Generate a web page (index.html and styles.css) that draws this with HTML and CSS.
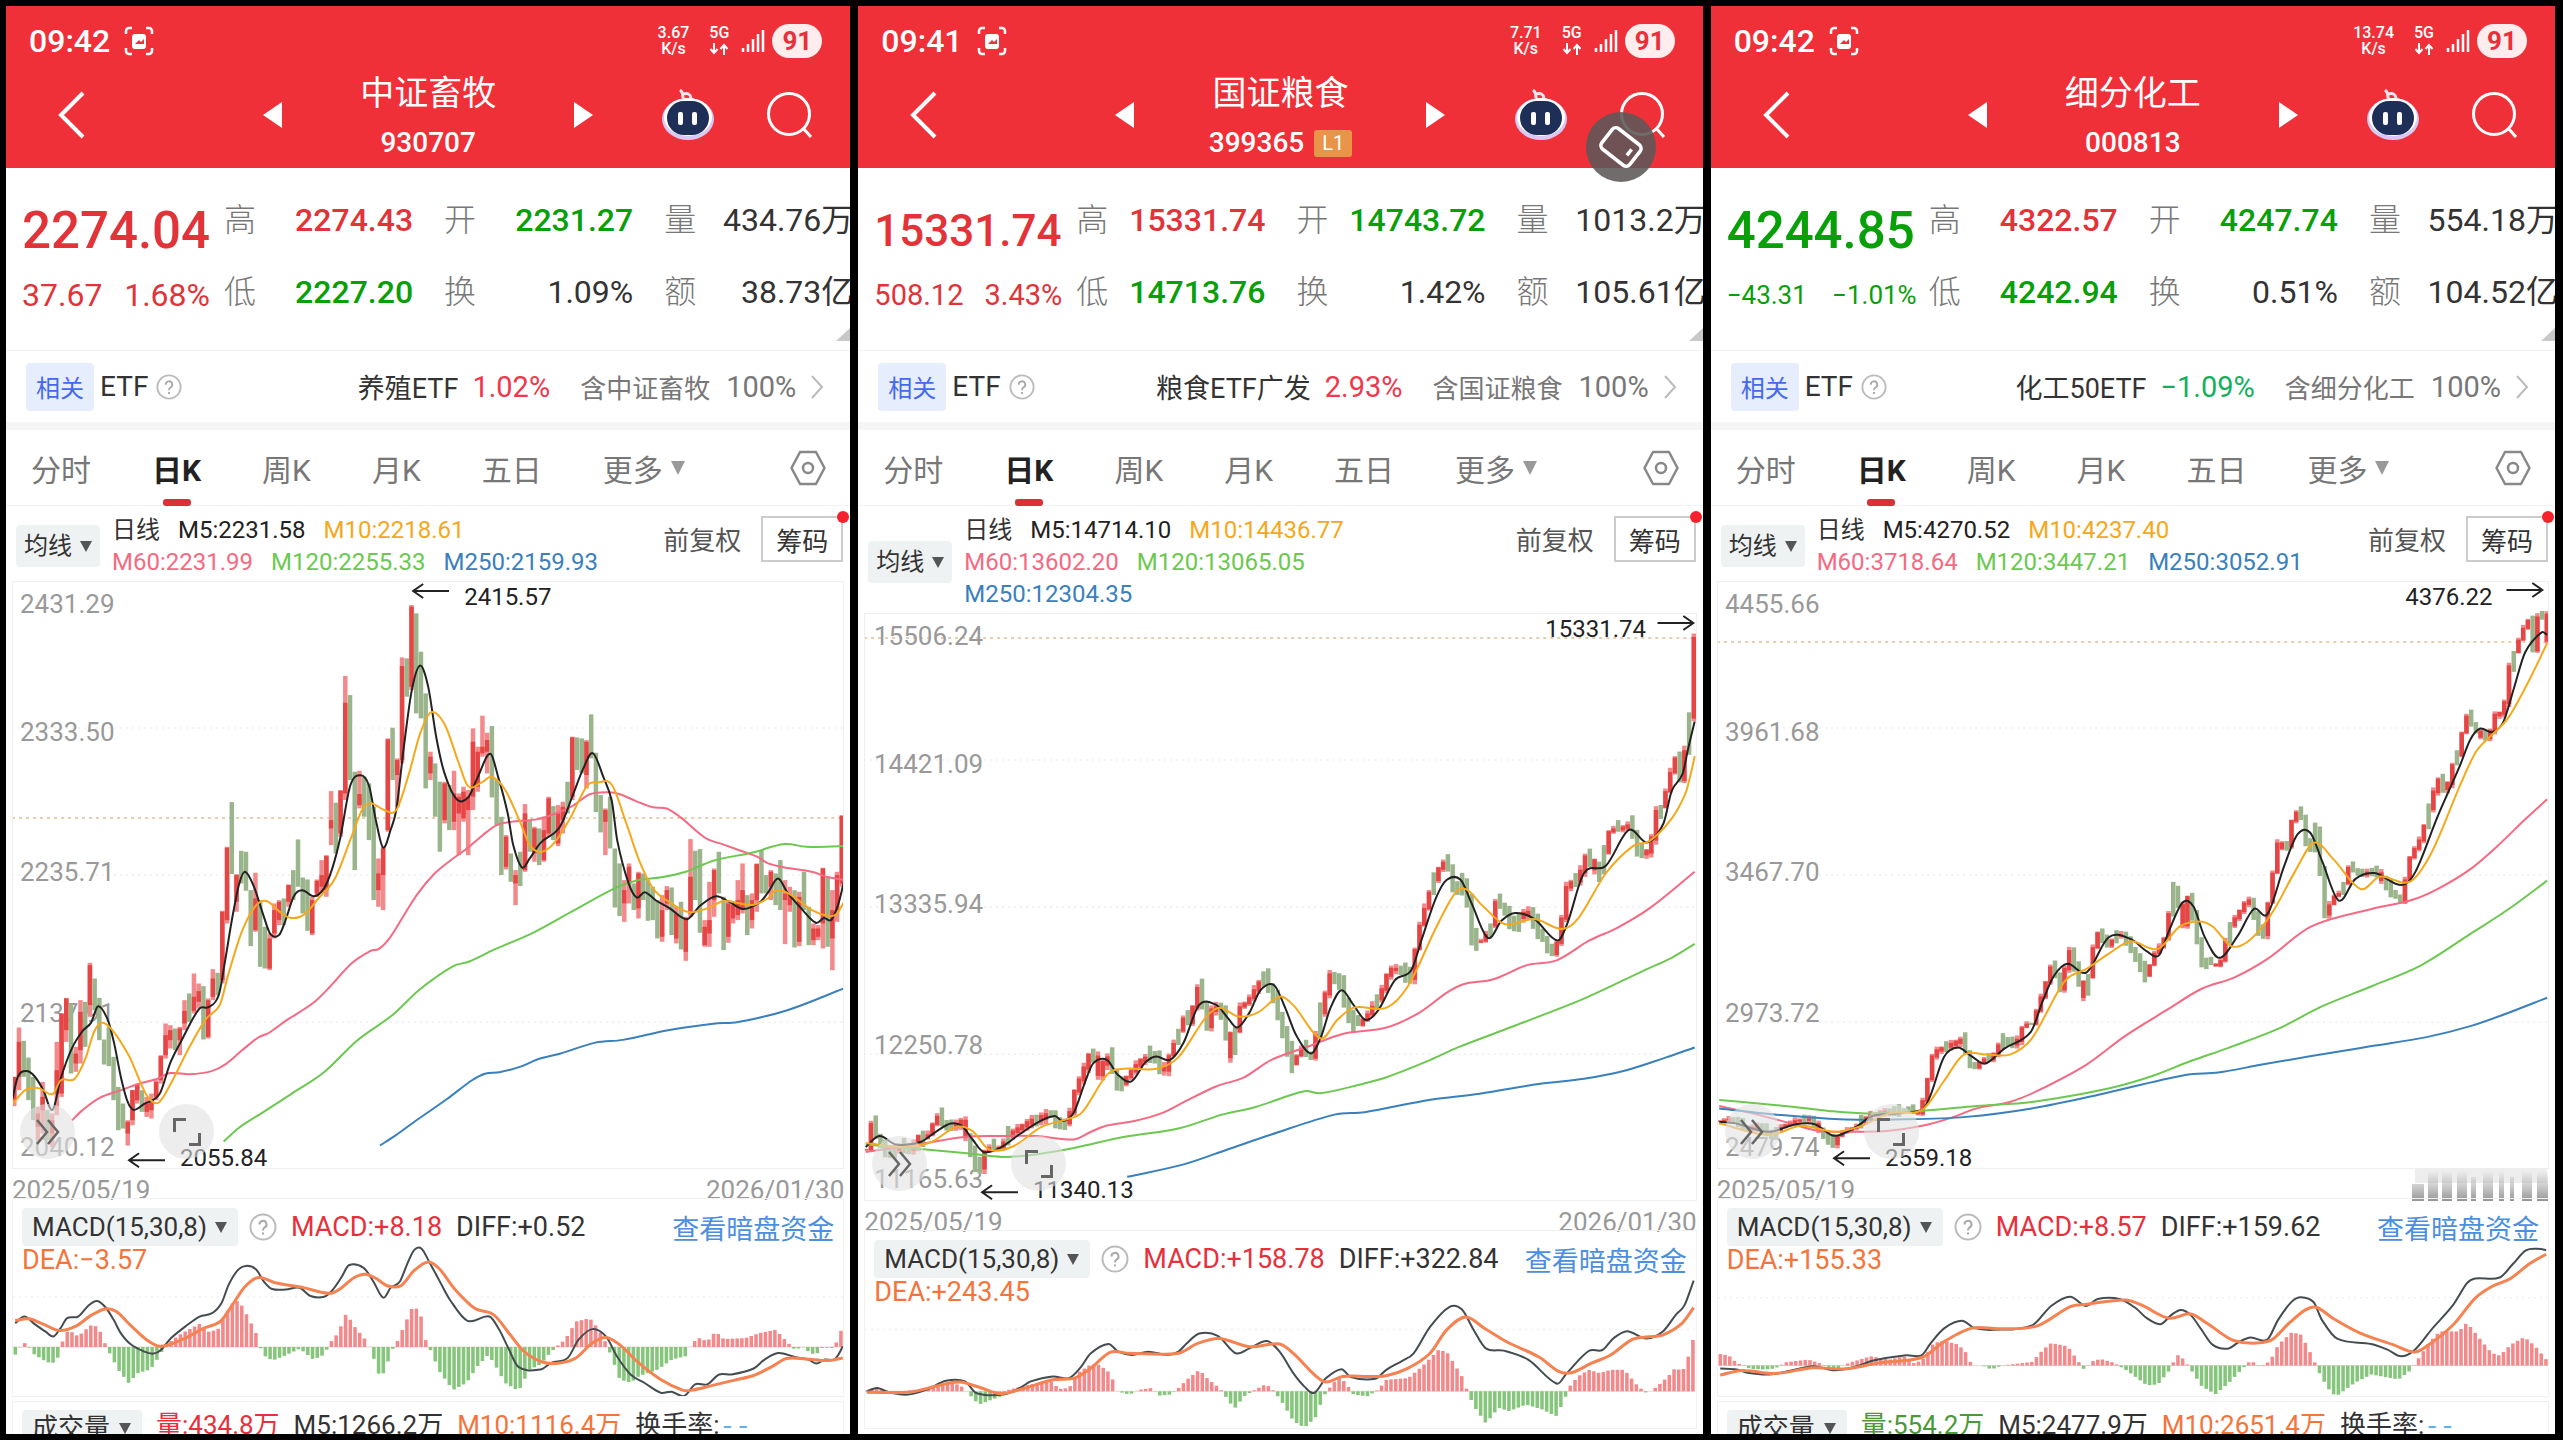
FILE: index.html
```html
<!DOCTYPE html>
<html lang="zh-CN">
<head>
  <meta charset="UTF-8">
  <meta name="viewport" content="width=device-width, initial-scale=1.0">
  <title>指数行情</title>
  <link rel="stylesheet" href="styles.css">
</head>
<body>

<!-- shared icons -->
<svg class="sprite" aria-hidden="true">
  <symbol id="i-shot" viewBox="0 0 30 30">
    <path d="M2 8V5a3 3 0 0 1 3-3h3M22 2h3a3 3 0 0 1 3 3v3M28 22v3a3 3 0 0 1-3 3h-3M8 28H5a3 3 0 0 1-3-3v-3" fill="none" stroke="#fff" stroke-width="2.5"/>
    <rect x="8" y="8" width="14" height="15" rx="3" fill="#fff"/>
    <path d="M11 18l4-4 2 2 3-3v5z" fill="#f03038"/>
  </symbol>
  <symbol id="i-data" viewBox="0 0 20 12">
    <path d="M5 0v9M1.500 6L5 10l3.500-4M15 12V3M11.500 6L15 2l3.500 4" fill="none" stroke="#fff" stroke-width="2"/>
  </symbol>
  <symbol id="i-signal" viewBox="0 0 24 24">
    <path d="M2 19v4M7 15v8M12 10v13M17 5v18M22 1v22" stroke="#fff" stroke-width="2.500"/>
  </symbol>
  <symbol id="i-back" viewBox="0 0 28 48">
    <path d="M26 2L4 24l22 22" fill="none" stroke="#fff" stroke-width="4"/>
  </symbol>
  <symbol id="i-robot" viewBox="0 0 54 52">
    <path d="M19 1q3 2 3 8M22 5q7-2 8 4" fill="none" stroke="#fbe3ee" stroke-width="3"/>
    <ellipse cx="27" cy="30" rx="26" ry="21" fill="#d9c8f2"/>
    <ellipse cx="27" cy="28" rx="24" ry="19" fill="#fff"/>
    <rect x="6" y="12" width="42" height="34" rx="17" fill="#1d2f57"/>
    <rect x="17" y="23" width="5" height="13" rx="2" fill="#fff"/>
    <rect x="31" y="23" width="5" height="13" rx="2" fill="#fff"/>
  </symbol>
  <symbol id="i-search" viewBox="0 0 46 46">
    <circle cx="22" cy="22" r="20.500" fill="none" stroke="#fff" stroke-width="3"/>
    <path d="M36 36l8 9" stroke="#fff" stroke-width="3"/>
  </symbol>
  <symbol id="i-help" viewBox="0 0 28 28">
    <circle cx="14" cy="14" r="12.500" fill="none" stroke="#bbb" stroke-width="2"/>
    <path d="M10.500 11.500a3.500 3.500 0 1 1 5 3q-1.500 1-1.500 3M14 19.500v2" fill="none" stroke="#aaa" stroke-width="2"/>
  </symbol>
  <symbol id="i-more" viewBox="0 0 14 26">
    <path d="M2 2l10 11L2 24" fill="none" stroke="#bbb" stroke-width="2"/>
  </symbol>
  <symbol id="i-gear" viewBox="0 0 36 36">
    <path d="M10 2h16l8.500 16L26 34H10L1.500 18z" fill="none" stroke="#888" stroke-width="2.500" stroke-linejoin="round"/>
    <circle cx="18" cy="18" r="5" fill="none" stroke="#888" stroke-width="2.500"/>
  </symbol>
  <symbol id="i-forward" viewBox="0 0 26 28">
    <path d="M2 2l10 12L2 26M13 2l10 12-10 12" fill="none" stroke="#666" stroke-width="2.500"/>
  </symbol>
  <symbol id="i-expand" viewBox="0 0 28 28">
    <path d="M1.500 14V1.500H13M26.500 15v11.500H16" fill="none" stroke="#666" stroke-width="3"/>
  </symbol>
  <symbol id="i-arrow" viewBox="0 0 38 16">
    <path d="M38 8H2M12 1L2 8l10 7" fill="none" stroke="#222" stroke-width="2"/>
  </symbol>
</svg>

<!-- 中证畜牧 -->
<main class="phone">
  <header class="top">
    <div class="status">
      <span class="clock">09:42</span>
      <svg class="shot"><use href="#i-shot"/></svg>
      <span class="speed">3.67<br>K/s</span>
      <span class="net">5G<svg><use href="#i-data"/></svg></span>
      <svg class="signal"><use href="#i-signal"/></svg>
      <span class="battery">91</span>
    </div>
    <nav class="nav">
      <button class="back" aria-label="返回"><svg><use href="#i-back"/></svg></button>
      <div class="switcher">
        <button class="prev" aria-label="上一个"></button>
        <h1>中证畜牧<small>930707</small></h1>
        <button class="next" aria-label="下一个"></button>
      </div>
      <div class="tools">
        <button aria-label="助手"><svg class="robot"><use href="#i-robot"/></svg></button>
        <button aria-label="搜索"><svg class="search"><use href="#i-search"/></svg></button>
      </div>
    </nav>
  </header>

  <section class="quote">
    <div class="last up">
      <strong>2274.04</strong>
      <p><span>37.67</span><span>1.68%</span></p>
    </div>
    <dl class="stats">
      <div><dt>高</dt><dd class="up">2274.43</dd></div>
      <div><dt>开</dt><dd class="down">2231.27</dd></div>
      <div><dt>量</dt><dd>434.76万</dd></div>
      <div><dt>低</dt><dd class="down">2227.20</dd></div>
      <div><dt>换</dt><dd>1.09%</dd></div>
      <div><dt>额</dt><dd>38.73亿</dd></div>
    </dl>
  </section>

  <section class="etf">
    <span class="tag">相关</span>
    <span class="kind">ETF</span>
    <svg class="help"><use href="#i-help"/></svg>
    <a href="#" class="fund">养殖ETF</a>
    <span class="rate rise">1.02%</span>
    <span class="share">含中证畜牧</span>
    <span class="pct">100%</span>
    <svg class="more"><use href="#i-more"/></svg>
  </section>

  <nav class="tabs">
    <button>分时</button>
    <button class="active">日K</button>
    <button>周K</button>
    <button>月K</button>
    <button>五日</button>
    <button class="drop">更多</button>
    <button class="gear" aria-label="设置"><svg><use href="#i-gear"/></svg></button>
  </nav>

  <section class="ma">
    <label class="pick"><select aria-label="指标"><option>均线</option></select></label>
    <div class="legend">
      <p><span>日线</span><span class="m5">M5:2231.58</span><span class="m10">M10:2218.61</span></p>
      <p><span class="m60">M60:2231.99</span><span class="m120">M120:2255.33</span><span class="m250">M250:2159.93</span></p>
    </div>
    <span class="adjust">前复权</span>
    <button class="chips">筹码</button>
  </section>

  <section class="chart">
    <svg class="kline" viewBox="0 0 832 588">
      <path class="grid" d="M0 147H832M0 294H832M0 441H832"/>
      <path class="lastline" d="M0 237H832"/>
      <g class="axis">
        <text x="8" y="32">2431.29</text>
        <text x="8" y="160">2333.50</text>
        <text x="8" y="300">2235.71</text>
        <text x="8" y="441">2137.91</text>
        <text x="8" y="575">2040.12</text>
      </g>
      <svg data-candles="livestock" width="832" height="588" viewBox="0 -57 176 1764" preserveAspectRatio="none"></svg>
      <svg data-lines="livestock" width="832" height="588" viewBox="21 3 1518 1487" preserveAspectRatio="none"></svg>
      <g class="mark">
        <use href="#i-arrow" x="399" y="2" width="38" height="16"/>
        <text x="452" y="24">2415.57</text>
        <use href="#i-arrow" x="115" y="571" width="38" height="16"/>
        <text x="168" y="585">2055.84</text>
      </g>
    </svg>
    <button class="round forward" aria-label="快进"><svg><use href="#i-forward"/></svg></button>
    <button class="round expand" aria-label="全屏"><svg><use href="#i-expand"/></svg></button>
  </section>
  <div class="dates"><time>2025/05/19</time><time>2026/01/30</time></div>

  <section class="macd">
    <svg class="wave" data-macd="livestock" viewBox="21 85 1518 595" preserveAspectRatio="none"></svg>
    <div class="sub">
      <label class="pick"><select aria-label="副图"><option>MACD(15,30,8)</option></select></label>
      <svg class="help"><use href="#i-help"/></svg>
      <span class="hot">MACD:+8.18</span>
      <span>DIFF:+0.52</span>
      <a href="#">查看暗盘资金</a>
    </div>
    <p class="dea">DEA:−3.57</p>
  </section>

  <section class="volume">
    <label class="pick"><select aria-label="副图二"><option>成交量</option></select></label>
    <span class="hot">量:434.8万</span>
    <span>M5:1266.2万</span>
    <span class="dea">M10:1116.4万</span>
    <span>换手率:<i>--</i></span>
  </section>
</main>

<!-- 国证粮食 -->
<main class="phone">
  <header class="top">
    <div class="status">
      <span class="clock">09:41</span>
      <svg class="shot"><use href="#i-shot"/></svg>
      <span class="speed">7.71<br>K/s</span>
      <span class="net">5G<svg><use href="#i-data"/></svg></span>
      <svg class="signal"><use href="#i-signal"/></svg>
      <span class="battery">91</span>
    </div>
    <nav class="nav">
      <button class="back" aria-label="返回"><svg><use href="#i-back"/></svg></button>
      <div class="switcher">
        <button class="prev" aria-label="上一个"></button>
        <h1>国证粮食<small>399365<b>L1</b></small></h1>
        <button class="next" aria-label="下一个"></button>
      </div>
      <div class="tools">
        <button aria-label="助手"><svg class="robot"><use href="#i-robot"/></svg></button>
        <button aria-label="搜索"><svg class="search"><use href="#i-search"/></svg></button>
      </div>
    </nav>
    <button class="rotate" aria-label="旋转屏幕">
      <svg viewBox="0 0 44 44">
        <rect x="7" y="11" width="30" height="22" rx="4" fill="none" stroke="#fff" stroke-width="3" transform="rotate(38 22 22)"/>
        <path d="M27 29l4-5" stroke="#fff" stroke-width="3"/>
      </svg>
    </button>
  </header>

  <section class="quote">
    <div class="last up">
      <strong class="long">15331.74</strong>
      <p class="mid"><span>508.12</span><span>3.43%</span></p>
    </div>
    <dl class="stats">
      <div><dt>高</dt><dd class="up">15331.74</dd></div>
      <div><dt>开</dt><dd class="down">14743.72</dd></div>
      <div><dt>量</dt><dd>1013.2万</dd></div>
      <div><dt>低</dt><dd class="down">14713.76</dd></div>
      <div><dt>换</dt><dd>1.42%</dd></div>
      <div><dt>额</dt><dd>105.61亿</dd></div>
    </dl>
  </section>

  <section class="etf">
    <span class="tag">相关</span>
    <span class="kind">ETF</span>
    <svg class="help"><use href="#i-help"/></svg>
    <a href="#" class="fund">粮食ETF广发</a>
    <span class="rate rise">2.93%</span>
    <span class="share">含国证粮食</span>
    <span class="pct">100%</span>
    <svg class="more"><use href="#i-more"/></svg>
  </section>

  <nav class="tabs">
    <button>分时</button>
    <button class="active">日K</button>
    <button>周K</button>
    <button>月K</button>
    <button>五日</button>
    <button class="drop">更多</button>
    <button class="gear" aria-label="设置"><svg><use href="#i-gear"/></svg></button>
  </nav>

  <section class="ma">
    <label class="pick"><select aria-label="指标"><option>均线</option></select></label>
    <div class="legend">
      <p><span>日线</span><span class="m5">M5:14714.10</span><span class="m10">M10:14436.77</span></p>
      <p><span class="m60">M60:13602.20</span><span class="m120">M120:13065.05</span></p>
      <p><span class="m250">M250:12304.35</span></p>
    </div>
    <span class="adjust">前复权</span>
    <button class="chips">筹码</button>
  </section>

  <section class="chart">
    <svg class="kline" viewBox="0 0 832 588">
      <path class="grid" d="M0 147H832M0 294H832M0 441H832"/>
      <path class="lastline" d="M0 25H832"/>
      <g class="axis">
        <text x="10" y="32">15506.24</text>
        <text x="10" y="160">14421.09</text>
        <text x="10" y="300">13335.94</text>
        <text x="10" y="441">12250.78</text>
        <text x="10" y="575">11165.63</text>
      </g>
      <svg data-candles="grain" width="832" height="588" viewBox="0 367 176 1182" preserveAspectRatio="none"></svg>
      <svg data-lines="grain" width="832" height="588" viewBox="17 367 1518 1182" preserveAspectRatio="none"></svg>
      <g class="mark">
        <text x="681" y="24">15331.74</text>
        <use href="#i-arrow" width="38" height="16" transform="translate(831 2) scale(-1 1)"/>
        <use href="#i-arrow" x="116" y="571" width="38" height="16"/>
        <text x="169" y="585">11340.13</text>
      </g>
    </svg>
    <button class="round forward" aria-label="快进"><svg><use href="#i-forward"/></svg></button>
    <button class="round expand" aria-label="全屏"><svg><use href="#i-expand"/></svg></button>
  </section>
  <div class="dates"><time>2025/05/19</time><time>2026/01/30</time></div>

  <section class="macd">
    <svg class="wave" data-macd="grain" viewBox="17 180 1518 596" preserveAspectRatio="none"></svg>
    <div class="sub">
      <label class="pick"><select aria-label="副图"><option>MACD(15,30,8)</option></select></label>
      <svg class="help"><use href="#i-help"/></svg>
      <span class="hot">MACD:+158.78</span>
      <span>DIFF:+322.84</span>
      <a href="#">查看暗盘资金</a>
    </div>
    <p class="dea">DEA:+243.45</p>
  </section>
</main>

<!-- 细分化工 -->
<main class="phone">
  <header class="top">
    <div class="status">
      <span class="clock">09:42</span>
      <svg class="shot"><use href="#i-shot"/></svg>
      <span class="speed">13.74<br>K/s</span>
      <span class="net">5G<svg><use href="#i-data"/></svg></span>
      <svg class="signal"><use href="#i-signal"/></svg>
      <span class="battery">91</span>
    </div>
    <nav class="nav">
      <button class="back" aria-label="返回"><svg><use href="#i-back"/></svg></button>
      <div class="switcher">
        <button class="prev" aria-label="上一个"></button>
        <h1>细分化工<small>000813</small></h1>
        <button class="next" aria-label="下一个"></button>
      </div>
      <div class="tools">
        <button aria-label="助手"><svg class="robot"><use href="#i-robot"/></svg></button>
        <button aria-label="搜索"><svg class="search"><use href="#i-search"/></svg></button>
      </div>
    </nav>
  </header>

  <section class="quote">
    <div class="last down">
      <strong>4244.85</strong>
      <p class="small"><span>−43.31</span><span>−1.01%</span></p>
    </div>
    <dl class="stats">
      <div><dt>高</dt><dd class="up">4322.57</dd></div>
      <div><dt>开</dt><dd class="down">4247.74</dd></div>
      <div><dt>量</dt><dd>554.18万</dd></div>
      <div><dt>低</dt><dd class="down">4242.94</dd></div>
      <div><dt>换</dt><dd>0.51%</dd></div>
      <div><dt>额</dt><dd>104.52亿</dd></div>
    </dl>
  </section>

  <section class="etf">
    <span class="tag">相关</span>
    <span class="kind">ETF</span>
    <svg class="help"><use href="#i-help"/></svg>
    <a href="#" class="fund">化工50ETF</a>
    <span class="rate fall">−1.09%</span>
    <span class="share">含细分化工</span>
    <span class="pct">100%</span>
    <svg class="more"><use href="#i-more"/></svg>
  </section>

  <nav class="tabs">
    <button>分时</button>
    <button class="active">日K</button>
    <button>周K</button>
    <button>月K</button>
    <button>五日</button>
    <button class="drop">更多</button>
    <button class="gear" aria-label="设置"><svg><use href="#i-gear"/></svg></button>
  </nav>

  <section class="ma">
    <label class="pick"><select aria-label="指标"><option>均线</option></select></label>
    <div class="legend">
      <p><span>日线</span><span class="m5">M5:4270.52</span><span class="m10">M10:4237.40</span></p>
      <p><span class="m60">M60:3718.64</span><span class="m120">M120:3447.21</span><span class="m250">M250:3052.91</span></p>
    </div>
    <span class="adjust">前复权</span>
    <button class="chips">筹码</button>
  </section>

  <section class="chart">
    <svg class="kline" viewBox="0 0 832 588">
      <path class="grid" d="M0 147H832M0 294H832M0 441H832"/>
      <path class="lastline" d="M0 61H832"/>
      <g class="axis">
        <text x="8" y="32">4455.66</text>
        <text x="8" y="160">3961.68</text>
        <text x="8" y="300">3467.70</text>
        <text x="8" y="441">2973.72</text>
        <text x="8" y="575">2479.74</text>
      </g>
      <svg data-candles="chemical" width="832" height="588" viewBox="0 307 176 1180" preserveAspectRatio="none"></svg>
      <svg data-lines="chemical" width="832" height="588" viewBox="26 307 1518 1180" preserveAspectRatio="none"></svg>
      <g class="mark">
        <text x="688" y="24">4376.22</text>
        <use href="#i-arrow" width="38" height="16" transform="translate(827 1) scale(-1 1)"/>
        <use href="#i-arrow" x="115" y="569" width="38" height="16"/>
        <text x="168" y="585">2559.18</text>
      </g>
    </svg>
    <button class="round forward" aria-label="快进"><svg><use href="#i-forward"/></svg></button>
    <button class="round expand" aria-label="全屏"><svg><use href="#i-expand"/></svg></button>
  </section>
  <div class="dates">
    <time>2025/05/19</time>
    <svg class="smear" viewBox="0 0 138 32">
      <defs>
        <linearGradient id="smear" x1="0" y1="0" x2="0" y2="1">
          <stop offset="0" stop-color="#999" stop-opacity="0"/>
          <stop offset=".5" stop-color="#999" stop-opacity=".5"/>
          <stop offset="1" stop-color="#888" stop-opacity=".9"/>
        </linearGradient>
      </defs>
      <path fill="#ededed" d="M4 0h132v14h-132z"/>
      <path fill="url(#smear)" d="M1 15h12v17h-12zM17 2h10v30h-10zM31 2h10v30h-10zM46 2h10v30h-10zM60 8h5v24h-5zM72 2h10v30h-10zM88 2h5v30h-5zM99 8h4v24h-4zM111 2h10v30h-10zM126 2h11v30h-11z"/>
    </svg>
  </div>

  <section class="macd">
    <svg class="wave" data-macd="chemical" viewBox="26 85 1518 595" preserveAspectRatio="none"></svg>
    <div class="sub">
      <label class="pick"><select aria-label="副图"><option>MACD(15,30,8)</option></select></label>
      <svg class="help"><use href="#i-help"/></svg>
      <span class="hot">MACD:+8.57</span>
      <span>DIFF:+159.62</span>
      <a href="#">查看暗盘资金</a>
    </div>
    <p class="dea">DEA:+155.33</p>
  </section>

  <section class="volume">
    <label class="pick"><select aria-label="副图二"><option>成交量</option></select></label>
    <span class="cold">量:554.2万</span>
    <span>M5:2477.9万</span>
    <span class="dea">M10:2651.4万</span>
    <span>换手率:<i>--</i></span>
  </section>
</main>

<script src="charts.js"></script>
</body>
</html>
```

FILE: styles.css
```css
* { box-sizing: border-box; }
body {
  margin: 0;
  height: 100vh;
  padding: 6px 8px 6px 6px;
  display: grid;
  grid-template-columns: repeat(3, 1fr);
  gap: 8px;
  background: #000;
  color: #333;
  font-family: Roboto, "Noto Sans CJK SC", sans-serif;
  overflow: hidden;
}
button, select {
  border: none;
  padding: 0;
  margin: 0;
  background: none;
  color: inherit;
  font: inherit;
  cursor: pointer;
}
a { color: inherit; text-decoration: none; }
p, h1, dl, dd { margin: 0; }
svg { display: block; }
.sprite { position: absolute; width: 0; height: 0; }
.phone {
  position: relative;
  min-width: 0;
  background: #fff;
  overflow: hidden;
  white-space: nowrap;
}

/* header */
.top { background: #f03038; color: #fff; position: relative; }
.status {
  display: flex;
  align-items: center;
  height: 62px;
  padding: 8px 28px 0 23px;
}
.clock { font-size: 32px; font-weight: 500; }
.shot { width: 30px; height: 30px; margin: 0 auto 0 14px; }
.speed, .net {
  font-size: 16px;
  line-height: 16px;
  font-weight: 500;
  text-align: center;
}
.net { margin: 0 12px 0 20px; }
.net svg { width: 20px; height: 12px; margin: 2px 0; }
.signal { width: 24px; height: 24px; margin-right: 7px; }
.battery {
  width: 50px;
  border-radius: 17px;
  background: #ffecec;
  color: #e8303a;
  font-size: 26px;
  line-height: 34px;
  font-weight: 700;
  text-align: center;
}
.nav {
  display: grid;
  grid-template-columns: 1fr 330px 1fr;
  align-items: center;
  height: 100px;
}
.nav button { margin-bottom: 6px; }
.back { justify-self: start; margin-left: 51px; }
.back svg { width: 28px; height: 48px; }
.switcher { display: flex; align-items: center; justify-content: space-between; }
.prev, .next {
  border: solid transparent;
  border-width: 13px 0;
}
.switcher .prev { border-right: 19px solid #fff; }
.switcher .next { border-left: 19px solid #fff; }
h1 { font-size: 34px; line-height: 50px; font-weight: 400; text-align: center; }
h1 small {
  display: flex;
  justify-content: center;
  align-items: center;
  font-size: 28px;
  font-weight: 500;
}
h1 b {
  margin-left: 10px;
  padding: 0 8px;
  border-radius: 3px;
  background: #e8954a;
  font-size: 20px;
  line-height: 27px;
  font-weight: 400;
}
.tools { display: flex; align-items: center; justify-content: flex-end; gap: 52px; padding-right: 37px; }
.robot { width: 54px; height: 52px; }
.search { width: 46px; height: 46px; }
.rotate {
  position: absolute;
  right: 47px;
  top: 106px;
  width: 70px;
  height: 70px;
  border-radius: 50%;
  background: rgba(92, 88, 88, .88);
}
.rotate svg { width: 52px; margin: auto; }

/* quote */
.up { color: #e23338; }
.down { color: #08a008; }
.quote {
  position: relative;
  display: flex;
  padding: 16px 0 22px 16px;
  overflow: hidden;
}
.quote::after {
  content: '';
  position: absolute;
  right: 0;
  bottom: 9px;
  border-left: 14px solid transparent;
  border-bottom: 13px solid #c8c8c8;
}
.last { width: 202px; }
.last strong { display: block; font-size: 51px; line-height: 94px; font-weight: 500; }
.last .long { font-size: 44px; }
.last p {
  display: flex;
  justify-content: space-between;
  padding-right: 14px;
  font-size: 32px;
  line-height: 34px;
}
.last .mid { font-size: 29px; }
.last .small { font-size: 26px; padding-right: 12px; }
.stats {
  flex: 1;
  display: grid;
  grid-template-columns: repeat(3, 1fr);
  column-gap: 31px;
  margin-right: -3px;
  font-size: 32px;
  line-height: 72px;
}
.stats div { display: flex; justify-content: space-between; }
.stats dt { color: #777; font-weight: 300; }
.stats dd { font-weight: 500; }
.stats dd:not(.up):not(.down) { font-weight: 400; }

/* related etf */
.etf {
  display: flex;
  align-items: center;
  height: 80px;
  padding: 0 26px 0 20px;
  border-top: 1px solid #f3f3f3;
  border-bottom: 8px solid #f5f5f5;
  font-size: 28px;
}
.tag {
  padding: 4px 10px 0;
  border-radius: 4px;
  background: #e6edfd;
  color: #4468ee;
  font-size: 24px;
  line-height: 44px;
}
.kind { margin: 0 8px 0 6px; }
.help { width: 26px; height: 26px; }
.fund { margin: 0 14px 0 auto; font-size: 27px; }
.rate, .pct { font-size: 29px; }
.rise { color: #f2364c; }
.fall { color: #12b05c; }
.share { margin: 0 16px 0 30px; color: #777; font-size: 26px; }
.pct { margin-right: 14px; color: #777; }
.more { width: 14px; height: 26px; }

/* period tabs */
.tabs {
  display: flex;
  align-items: center;
  gap: 61px;
  height: 76px;
  padding: 0 24px 0 25px;
  border-bottom: 1px solid #f3f3f3;
  color: #777;
  font-size: 30px;
}
.tabs button { position: relative; height: 76px; }
.tabs .active { color: #222; font-weight: 700; }
.tabs .active::after {
  content: '';
  position: absolute;
  left: 50%;
  bottom: 0;
  width: 28px;
  height: 7px;
  margin-left: -14px;
  border-radius: 3px;
  background: #dc3038;
}
.drop::after {
  content: '';
  display: inline-block;
  margin: 0 0 6px 8px;
  border: solid transparent;
  border-width: 14px 7px 0;
  border-top-color: #999;
}
.gear { margin-left: auto; }
.gear svg { width: 36px; height: 36px; }

/* moving averages */
.pick {
  display: inline-flex;
  align-items: center;
  height: 38px;
  padding: 0 11px 0 10px;
  border-radius: 4px;
  background: #eff2f2;
}
.pick select { appearance: none; outline: none; }
.pick::after {
  content: '';
  margin-left: 8px;
  border: solid transparent;
  border-width: 11px 6px 0;
  border-top-color: #555;
}
.ma {
  display: flex;
  padding: 8px 7px 3px 10px;
  font-size: 24px;
}
.ma .pick { align-self: center; height: 42px; margin-right: 12px; padding: 0 8px; }
.legend { flex: 1; line-height: 32px; }
.legend p { display: flex; gap: 18px; }
.m5 { color: #222; }
.m10 { color: #f5a81c; }
.m60 { color: #f56a82; }
.m120 { color: #6cc850; }
.m250 { color: #3a80bc; }
.adjust { margin-right: 20px; color: #555; font-size: 26px; line-height: 54px; }
.chips {
  position: relative;
  height: 46px;
  margin-top: 2px;
  padding: 0 13px;
  border: 2px solid #ccc;
  font-size: 26px;
}
.chips::after {
  content: '';
  position: absolute;
  right: -8px;
  top: -7px;
  width: 12px;
  height: 12px;
  border-radius: 50%;
  background: #f5222d;
}

/* candles */
.chart { position: relative; margin: 0 6px; }
.kline { width: 100%; height: auto; outline: 1px solid #eee; outline-offset: -1px; }
.grid { fill: none; stroke: #e6e6e6; stroke-dasharray: 2 4; }
.lastline { stroke: #e6cfae; stroke-width: 2; stroke-dasharray: 3 4; }
.axis { fill: #999; font-size: 26px; }
.mark { fill: #222; font-size: 24px; }
.line { fill: none; stroke-width: 2; vector-effect: non-scaling-stroke; stroke-linejoin: round; }
.line.m5 { stroke: #222; }
.line.m10 { stroke: #f5a81c; }
.line.m60 { stroke: #f56a82; }
.line.m120 { stroke: #6cc850; }
.line.m250 { stroke: #3a80bc; }
.body { fill: #e64545; }
.wick { fill: #f28a8c; }
.fallbar { fill: #9ab58c; }
.round {
  position: absolute;
  bottom: 10px;
  width: 55px;
  height: 55px;
  border-radius: 50%;
  background: rgba(225, 225, 225, .6);
}
.forward { left: 8px; }
.forward svg { width: 26px; height: 28px; margin: auto; }
.expand { left: 147px; }
.expand svg { width: 28px; height: 28px; margin: auto; }
.dates {
  display: flex;
  justify-content: space-between;
  margin: 0 6px;
  color: #999;
  font-size: 26px;
  line-height: 42px;
  height: 29px;
}
.smear { width: 138px; height: 32px; }

/* macd */
.macd {
  position: relative;
  height: 199px;
  margin: 0 6px;
  padding: 10px 9px 0 9px;
  border: 1px solid #f1f1f1;
  font-size: 27px;
}
.wave { position: absolute; left: 0; top: 0; width: 100%; height: 100%; }
.zero { stroke: #e8d8d8; vector-effect: non-scaling-stroke; }
.half { stroke: #ececec; stroke-dasharray: 2 4; vector-effect: non-scaling-stroke; }
.plus { fill: #f28a8c; }
.minus { fill: #86c67c; }
.line.diff { stroke: #444c50; }
.line.signal-line { stroke: #f58250; stroke-width: 3; }
.sub { position: relative; display: flex; align-items: center; gap: 14px; height: 36px; }
.sub .pick { font-size: 26px; }
.sub .help { width: 28px; height: 28px; margin-left: -3px; }
.sub a { margin-left: auto; color: #4c8fe0; }
.hot { color: #e8303c; }
.cold { color: #4a9a38; }
.dea { position: relative; color: #f5743c; line-height: 30px; }

/* volume */
.volume {
  display: flex;
  align-items: flex-start;
  gap: 14px;
  margin: 4px 6px 0;
  padding: 8px 0 0 9px;
  border: 1px solid #f1f1f1;
  font-size: 26px;
  line-height: 30px;
}
.volume .pick { height: 36px; }
.volume i { color: #5ab0f0; font-style: normal; font-family: "Liberation Mono", monospace; }
```

FILE: charts.js
```js
const COUNT = 176;
const NS = 'http://www.w3.org/2000/svg';

// candle: [top, bottom] for a falling day, [high, close, open, low] for a rising day
const candles = {
  livestock: [
    [1430,1430,1500,1518],[1282,1325,1430,1470],[1322,1430],[1372,1500],[1430,1560],[1520,1540,1580,1620],
    [1445,1490,1530,1600],[1530,1620],[1540,1560,1600,1640],[1325,1410,1480,1545],[1240,1240,1480,1490],
    [1193,1195,1290,1325],[1210,1420],[1340,1360,1390,1415],[1200,1235,1350,1390],[1205,1340],
    [1088,1095,1215,1250],[1135,1230],[1193,1320],[1318,1393],[1280,1398],[1370,1500],[1460,1590],[1510,1585],
    [1560,1565,1600,1636],[1470,1470,1560,1575],[1450,1452,1500,1510],[1470,1535],[1490,1510,1535,1550],
    [1480,1500,1530,1555],[1440,1445,1490,1500],[1365,1368,1440,1450],[1270,1305,1365,1375],
    [1275,1290,1320,1345],[1285,1350],[1280,1285,1320,1365],[1200,1232,1270,1290],[1180,1265],
    [1120,1190,1232,1240],[1150,1173,1205,1225],[1158,1318],[1195,1200,1310,1315],[1107,1135,1190,1200],
    [1118,1185],[932,935,1140,1150],[740,743,960,970],[606,822],[822,825,905,935],[752,850],[755,872],
    [870,1038],[818,895,990,995],[900,1100],[980,1105],[1000,1015,1105,1110],[910,930,1000,1015],
    [900,905,960,975],[895,975],[853,855,905,920],[810,900],[718,860],[832,940],[838,992],
    [890,900,1000,1005],[838,842,880,890],[780,825,860,880],[765,768,870,890],[573,660,685,735],[608,760],
    [570,572,700,710],[228,308,580,600],[285,540],[515,810],[512,582,615,625],[530,650],[550,720],[620,900],
    [775,820,870,920],[740,745,825,930],[415,418,690,695],[383,540],[475,480,525,620],[172,198,480,490],
    [175,290],[15,20,260,270],[40,340],[155,355],[280,565],[455,470,520,540],[490,650],[545,755],
    [545,550,660,670],[555,690],[512,580,665,690],[580,590,640,765],[560,575,655,665],[570,590,630,765],
    [385,425,590,630],[440,455,560,575],[347,440,460,470],[398,420,455,520],[378,592],[540,675],[650,825],
    [705,710,800,808],[760,845],[810,825,850,915],[755,858],[612,640,810,815],[660,755],[680,685,760,785],
    [685,795],[650,690,780,785],[590,595,700,710],[618,720],[615,640,730,738],[605,620,660,700],[545,640],
    [410,412,590,600],[412,510],[415,520],[420,425,525,565],[343,475],[458,636],[585,697],[625,630,665,765],
    [590,745],[745,922],[790,948],[840,870,910,965],[790,800,850,910],[850,930],[815,820,925,955],[820,900],
    [840,962],[860,960],[900,1015],[885,930,1010,1025],[858,870,910,930],[862,1005],[920,940,1015,1030],
    [905,1048],[950,955,1055,1082],[717,830,940,950],[752,900],[747,998],[960,980,1035,1040],
    [845,960,1000,1040],[805,810,900,950],[755,880],[890,1050],[900,910,1010,1028],[905,915,955,970],
    [840,900,945,960],[790,870,930,940],[885,1005],[880,900,960,985],[790,792,900,935],[750,880],[825,880],
    [810,815,860,900],[820,915],[780,930],[840,880,900,1032],[860,885,915,935],[870,1042],
    [875,890,1025,1038],[815,930],[920,1035],[970,985,1020,1035],[975,985,1010,1020],[803,805,970,1045],
    [832,1040],[870,930,1015,1110],[815,825,930,965],[645,648,850,860]
  ],
  grain: fromPath(22, '22,1445 30,1390 40,1420 60,1460 75,1440 105,1440 115,1415 130,1425 150,1375 165,1400 185,1395 195,1385 210,1440 225,1490 240,1440 265,1440 285,1410 320,1385 355,1370 370,1405 390,1385 400,1330 415,1290 432,1240 445,1290 460,1250 480,1325 495,1300 520,1265 545,1250 562,1290 580,1240 600,1180 610,1190 628,1110 642,1200 655,1150 670,1170 687,1255 705,1150 715,1150 745,1095 765,1140 780,1200 798,1275 815,1240 832,1265 850,1170 868,1090 885,1110 900,1170 915,1200 935,1175 960,1130 975,1080 1000,1080 1012,1110 1030,1000 1048,930 1065,880 1080,860 1095,930 1113,900 1128,1030 1145,1025 1160,1000 1170,945 1185,960 1200,1005 1215,970 1230,965 1250,1010 1270,1060 1285,1020 1300,910 1320,900 1335,850 1360,890 1378,800 1395,800 1415,790 1430,850 1452,840 1460,765 1475,755 1485,700 1500,650 1510,730 1518,590 1525,570 1532,415', 14),
  chemical: fromPath(30, '30,1390 50,1385 75,1405 100,1400 125,1415 145,1400 170,1388 195,1385 215,1410 235,1435 250,1415 280,1400 305,1375 340,1368 375,1370 395,1375 403,1340 420,1250 440,1240 470,1225 490,1290 510,1265 525,1265 545,1225 570,1235 585,1195 600,1195 620,1130 637,1070 650,1130 668,1045 680,1090 697,1145 717,1005 735,1040 760,1010 785,1050 807,1100 825,1050 840,1030 860,915 875,1000 885,935 910,1070 942,1080 960,1000 995,940 1020,1030 1050,820 1062,860 1077,770 1090,770 1105,860 1117,800 1135,975 1150,940 1165,930 1177,880 1200,895 1225,885 1250,920 1272,955 1290,860 1310,820 1340,700 1355,730 1365,680 1380,650 1390,570 1405,600 1425,625 1440,600 1450,550 1458,590 1470,480 1490,420 1505,380 1515,450 1525,360 1533,375 1541,430', 10)
};

const lines = {
  livestock: {
    m60: '130,1367 150,1340 180,1310 220,1290 250,1275 285,1262 310,1247 345,1250 385,1242 410,1225 440,1190 470,1157 490,1145 520,1115 570,1070 600,1030 640,970 675,938 690,933 710,905 735,850 760,795 790,745 820,710 850,680 880,645 905,620 930,612 980,605 1010,592 1045,570 1075,542 1110,537 1130,542 1160,560 1190,575 1215,578 1240,600 1285,652 1320,670 1350,685 1380,700 1400,717 1430,727 1480,738 1510,752 1538,758',
    m120: '407,1420 435,1385 480,1345 530,1300 590,1245 650,1165 715,1100 765,1035 825,977 855,965 900,935 970,893 1040,840 1120,780 1160,760 1205,752 1250,738 1300,710 1370,690 1430,668 1470,675 1538,673',
    m250: '692,1430 720,1405 760,1365 815,1312 860,1265 885,1248 910,1245 950,1230 980,1212 1020,1198 1085,1170 1135,1163 1220,1138 1300,1122 1345,1118 1435,1088 1538,1033',
    m5: '22,1310 32,1255 47,1242 62,1255 78,1290 95,1340 110,1260 130,1185 150,1140 165,1120 178,1078 195,1110 207,1170 220,1260 232,1320 243,1340 262,1325 290,1300 310,1220 330,1165 362,1085 380,1080 398,1050 410,960 422,860 435,770 446,738 462,775 480,850 492,895 508,898 520,860 535,800 550,785 572,800 590,780 605,730 620,650 638,520 657,494 672,520 685,610 698,677 712,630 722,580 735,430 750,280 765,217 780,270 795,400 810,490 832,555 853,550 870,500 893,440 908,500 925,590 935,670 951,727 965,705 985,665 1020,625 1045,540 1062,480 1080,438 1100,500 1115,560 1125,660 1145,765 1160,803 1175,790 1195,810 1220,830 1252,858 1275,825 1305,800 1330,815 1355,832 1385,815 1400,790 1418,755 1435,790 1460,830 1487,867 1502,855 1515,860 1528,820 1538,765',
    m10: '22,1325 45,1290 70,1285 95,1300 110,1265 135,1262 155,1210 170,1145 185,1120 205,1140 235,1205 255,1270 270,1310 288,1322 310,1275 345,1180 375,1110 400,1075 415,1000 440,890 465,825 485,812 510,840 530,855 555,845 580,805 610,755 640,650 660,580 675,565 700,582 722,582 745,490 765,390 785,335 810,365 835,460 853,522 880,510 895,498 920,530 950,620 965,670 985,688 1010,665 1040,600 1070,520 1090,512 1115,518 1140,610 1165,710 1190,780 1220,815 1255,840 1290,830 1320,812 1370,822 1400,805 1415,785 1440,795 1480,835 1510,850 1525,845 1538,815'
  },
  grain: {
    m60: '20,1450 130,1432 200,1420 260,1418 330,1418 400,1425 430,1410 460,1397 510,1388 560,1372 600,1350 660,1318 710,1300 760,1265 830,1237 890,1213 970,1200 1030,1170 1080,1130 1110,1113 1165,1103 1225,1075 1280,1065 1340,1025 1390,1000 1450,960 1532,887',
    m120: '20,1435 130,1445 200,1452 270,1460 330,1455 400,1442 490,1420 590,1403 670,1375 730,1360 820,1328 850,1332 920,1315 970,1300 1050,1265 1100,1240 1200,1198 1330,1142 1440,1085 1490,1060 1532,1032',
    m250: '497,1500 600,1475 680,1445 760,1415 875,1375 930,1370 1050,1345 1140,1333 1250,1313 1330,1303 1400,1288 1480,1260 1532,1240',
    m5: '20,1440 45,1418 75,1435 120,1430 150,1408 175,1393 195,1397 215,1425 235,1450 265,1442 300,1415 335,1390 365,1378 380,1388 400,1370 420,1310 435,1272 460,1265 480,1295 505,1308 530,1270 550,1258 575,1265 600,1230 628,1155 660,1155 680,1180 698,1200 720,1170 740,1125 765,1115 785,1160 805,1215 832,1252 850,1220 868,1160 888,1125 910,1155 932,1185 955,1165 985,1105 1015,1085 1035,1020 1060,940 1080,903 1105,903 1125,950 1155,1020 1180,985 1205,970 1240,982 1282,1025 1300,990 1330,890 1370,875 1412,803 1445,828 1475,790 1490,725 1510,690 1520,640 1532,585',
    m10: '20,1432 90,1440 140,1430 185,1400 215,1408 245,1445 290,1438 340,1400 385,1385 415,1370 460,1295 490,1283 550,1283 590,1260 640,1180 665,1160 700,1178 735,1170 775,1138 800,1155 850,1222 880,1185 910,1160 970,1160 1010,1115 1060,1000 1095,930 1115,922 1145,955 1185,992 1240,982 1290,1002 1320,980 1370,890 1420,835 1450,825 1490,780 1515,730 1525,690 1532,655'
  },
  chemical: {
    m60: '30,1360 90,1375 150,1392 210,1410 280,1412 340,1410 400,1400 450,1385 500,1365 560,1352 610,1330 700,1277 770,1220 850,1165 910,1125 970,1102 1030,1065 1110,1000 1220,965 1290,948 1340,925 1400,885 1450,838 1500,785 1540,745',
    m120: '30,1348 130,1358 230,1370 300,1375 400,1370 500,1360 600,1352 740,1325 820,1300 890,1270 960,1243 1050,1205 1130,1160 1220,1120 1310,1078 1400,1015 1470,965 1540,908',
    m250: '30,1365 130,1377 250,1387 370,1387 480,1382 600,1365 720,1338 880,1298 940,1293 1020,1277 1110,1260 1220,1240 1320,1222 1400,1200 1470,1173 1540,1143',
    m5: '30,1392 60,1395 120,1412 170,1397 205,1397 240,1420 280,1402 310,1380 400,1368 415,1340 440,1262 465,1243 490,1260 515,1275 550,1245 598,1212 620,1150 640,1100 665,1075 700,1092 740,1022 780,1025 810,1050 832,1058 850,1010 875,952 895,960 915,1020 942,1063 975,1020 1005,965 1030,975 1060,880 1085,815 1108,812 1130,870 1160,948 1190,905 1225,893 1275,917 1300,890 1340,780 1380,680 1400,625 1418,603 1440,610 1460,590 1480,520 1500,450 1530,410 1540,415',
    m10: '30,1395 120,1418 180,1400 240,1412 290,1400 340,1375 400,1368 440,1310 475,1258 520,1257 560,1257 600,1225 660,1110 700,1085 740,1055 780,1030 830,1045 870,1000 905,990 930,1000 965,1040 1000,1025 1040,970 1080,890 1115,832 1150,865 1200,925 1235,900 1290,910 1330,850 1380,720 1410,650 1440,615 1470,580 1510,500 1540,432'
  }
};

const macd = {
  livestock: {
    zero: 532, half: 381, left: 21,
    diff: '25,460 42,440 60,462 80,485 95,500 108,475 120,445 140,440 160,405 175,393 190,412 205,450 218,490 235,522 260,545 278,552 292,540 310,505 340,465 362,440 385,430 402,400 415,345 432,300 447,287 465,297 480,335 495,357 520,358 545,353 565,378 590,380 605,360 622,320 635,285 662,293 680,335 698,383 712,352 728,335 742,280 755,238 768,235 782,275 800,330 820,390 852,453 892,440 910,480 925,530 945,592 985,600 1005,580 1035,565 1055,510 1080,478 1105,500 1125,560 1150,615 1175,640 1205,670 1225,667 1248,680 1268,645 1290,645 1312,615 1335,615 1375,597 1395,570 1420,550 1450,562 1475,570 1490,582 1505,570 1522,570 1530,555 1538,530',
    dea: '25,452 50,447 75,462 105,482 135,470 165,435 190,417 210,425 235,465 265,510 290,530 330,510 370,475 400,455 420,410 445,350 470,322 500,338 550,352 600,370 620,355 645,322 665,312 685,325 705,347 730,347 755,300 780,275 800,295 830,360 865,415 900,435 930,495 955,545 990,578 1020,580 1050,565 1080,520 1105,503 1130,525 1165,580 1205,630 1245,662 1260,663 1300,648 1340,632 1375,618 1410,590 1435,567 1470,568 1510,573 1538,565',
    bars: '25,555 34,532 42,520 50,532 60,555 80,575 92,583 105,560 112,510 122,480 140,500 160,470 168,462 180,485 190,525 200,560 215,605 232,640 250,610 272,600 288,560 300,525 330,490 362,462 375,487 395,480 410,430 425,392 435,395 450,440 465,490 472,532 482,560 495,573 515,560 545,537 570,570 590,555 600,520 615,490 630,430 645,470 665,510 672,532 680,565 690,617 700,610 712,545 722,520 735,470 752,408 765,425 775,510 785,545 800,605 825,662 850,640 870,590 890,555 905,595 920,640 945,665 965,600 985,585 1000,555 1015,530 1030,510 1050,455 1075,445 1090,475 1105,520 1118,575 1130,630 1150,640 1165,620 1200,600 1225,570 1250,560 1262,520 1275,505 1290,515 1305,485 1320,508 1360,505 1385,490 1415,480 1435,515 1450,540 1465,532 1480,553 1495,550 1503,525 1512,540 1522,530 1530,505 1538,465'
  },
  grain: {
    zero: 665, half: 478, left: 17,
    diff: '20,665 40,655 60,668 95,675 130,660 165,633 200,635 220,670 270,675 300,655 320,635 360,620 390,625 410,595 430,550 462,522 480,545 505,555 535,545 570,555 590,545 605,520 628,490 662,497 695,550 720,535 752,513 775,545 800,610 820,650 838,670 860,625 888,598 905,622 950,627 970,600 1000,572 1020,550 1050,470 1085,410 1108,417 1130,480 1152,535 1185,542 1230,570 1282,642 1300,610 1340,543 1365,540 1385,505 1410,483 1445,505 1475,485 1500,432 1515,405 1532,330',
    dea: '20,668 100,667 150,648 190,637 230,655 265,672 310,655 360,630 400,625 430,595 465,547 500,550 590,550 625,520 665,505 720,530 775,522 800,550 855,635 890,620 940,620 970,618 1010,595 1050,550 1080,480 1115,440 1150,475 1190,515 1250,562 1285,605 1310,608 1345,580 1380,555 1420,508 1450,500 1475,495 1510,460 1532,412',
    bars: '20,665 35,650 55,662 75,672 100,662 130,655 165,640 190,645 205,670 225,705 265,680 280,660 330,640 360,635 370,658 390,655 405,610 430,583 445,585 465,610 478,665 500,675 520,660 540,655 555,678 575,675 590,655 605,630 628,600 645,630 665,655 680,690 692,718 710,680 730,660 750,643 765,665 780,700 800,755 820,775 840,745 855,680 870,645 885,620 898,645 910,675 935,680 955,660 970,630 1010,625 1035,590 1065,540 1080,545 1110,625 1118,665 1130,710 1152,762 1175,715 1195,725 1225,705 1255,720 1280,740 1293,700 1305,650 1320,620 1340,600 1360,610 1380,600 1405,600 1430,650 1447,672 1465,650 1485,620 1500,590 1510,610 1520,570 1532,500'
  },
  chemical: {
    zero: 588, half: 383, left: 26,
    diff: '30,597 60,600 80,610 120,615 160,603 200,590 240,602 280,590 310,573 370,557 398,557 415,520 440,475 472,453 495,475 530,480 600,467 635,408 670,380 698,408 720,387 760,387 790,415 810,445 835,463 855,435 872,420 890,435 910,480 930,525 958,537 980,515 1000,503 1030,510 1050,450 1075,395 1092,382 1115,397 1130,450 1158,507 1220,523 1250,540 1275,560 1300,540 1330,480 1370,405 1395,340 1410,325 1455,322 1480,280 1503,240 1530,236 1540,240',
    dea: '30,617 70,603 130,612 200,595 260,598 320,580 400,563 440,515 490,475 540,477 610,468 670,410 700,403 770,390 800,405 850,445 890,432 920,460 970,513 1035,513 1070,460 1100,420 1120,412 1150,445 1200,490 1260,525 1300,547 1330,520 1370,465 1410,385 1440,350 1475,325 1510,280 1540,252',
    bars: '28,553 45,557 60,580 85,598 110,600 130,597 150,578 190,570 210,580 240,600 265,580 305,560 340,570 365,560 385,582 400,570 420,520 440,513 465,525 480,550 490,588 510,588 525,600 545,588 575,582 600,577 620,540 635,520 665,530 680,565 695,600 710,575 725,568 750,580 775,605 810,648 830,645 850,605 865,555 878,570 890,600 910,650 935,675 960,640 980,605 1000,572 1015,592 1035,575 1050,525 1075,487 1092,495 1112,560 1125,610 1140,655 1155,682 1190,640 1220,615 1270,630 1290,605 1305,570 1325,520 1345,485 1380,485 1395,458 1415,500 1440,550 1455,558 1475,525 1500,502 1520,530 1540,570'
  }
};

function parse(str) {
  return str.split(' ').map(p => p.split(',').map(Number));
}

function valueAt(points, x) {
  for (let i = 1; i < points.length; i++) {
    if (x <= points[i][0]) {
      const [x0, y0] = points[i - 1];
      const [x1, y1] = points[i];
      return y0 + (y1 - y0) * Math.max(0, x - x0) / (x1 - x0);
    }
  }
  return points[points.length - 1][1];
}

// builds one candle per day around a closing price path
function fromPath(start, str, spread) {
  const points = parse(str);
  const out = [];
  for (let i = 0; i < COUNT; i++) {
    const x = start + i * 8.63;
    const close = valueAt(points, x);
    const open = valueAt(points, x - 8.63);
    const a = spread * (0.2 + ((i * 37) % 11) / 9);
    const b = spread * (0.2 + ((i * 53) % 13) / 11);
    const top = Math.min(open, close);
    const bottom = Math.max(open, close);
    const rising = close < open ? (i * 31) % 6 !== 0 : (i * 29) % 7 === 0;
    if (rising) {
      out.push([Math.max(top - a / 2, 352), top, bottom + b / 2, bottom + b]);
    } else {
      out.push([top - a, bottom + b]);
    }
  }
  return out;
}

function add(svg, tag, attrs) {
  const el = document.createElementNS(NS, tag);
  for (const key in attrs) el.setAttribute(key, attrs[key]);
  svg.appendChild(el);
}

function bar(svg, cls, x, y1, y2, w) {
  add(svg, 'rect', { class: cls, x: x, y: Math.min(y1, y2), width: w, height: Math.abs(y2 - y1) });
}

// smooth curve through the points
function curve(svg, cls, str) {
  const p = parse(str);
  let d = 'M' + p[0];
  for (let i = 0; i < p.length - 1; i++) {
    const a = p[i - 1] || p[i], b = p[i], c = p[i + 1], e = p[i + 2] || c;
    const h = (c[0] - b[0]) / 3;
    const s1 = (c[1] - a[1]) / (c[0] - a[0]);
    const s2 = (e[1] - b[1]) / (e[0] - b[0]);
    d += `C${b[0] + h},${b[1] + s1 * h} ${c[0] - h},${c[1] - s2 * h} ${c}`;
  }
  add(svg, 'path', { class: 'line ' + cls, d: d });
}

document.querySelectorAll('[data-candles]').forEach(svg => {
  candles[svg.dataset.candles].forEach((c, i) => {
    if (c.length === 2) {
      bar(svg, 'fallbar', i, c[0], c[1], 0.95);
    } else {
      bar(svg, 'wick', i, c[0], c[3], 0.95);
      bar(svg, 'body', i, c[1], c[2], 0.95);
    }
  });
});

document.querySelectorAll('[data-lines]').forEach(svg => {
  const set = lines[svg.dataset.lines];
  for (const name in set) curve(svg, name, set[name]);
});

document.querySelectorAll('[data-macd]').forEach(svg => {
  const m = macd[svg.dataset.macd];
  const bars = parse(m.bars);
  add(svg, 'path', { class: 'half', d: `M${m.left} ${m.half}h1518` });
  add(svg, 'path', { class: 'zero', d: `M${m.left} ${m.zero}h1518` });
  for (let i = 0; i < COUNT; i++) {
    const x = m.left + i * 8.625;
    const y = valueAt(bars, x + 4);
    bar(svg, y < m.zero ? 'plus' : 'minus', x + 1, m.zero, y, 6.5);
  }
  curve(svg, 'diff', m.diff);
  curve(svg, 'signal-line', m.dea);
});
```
